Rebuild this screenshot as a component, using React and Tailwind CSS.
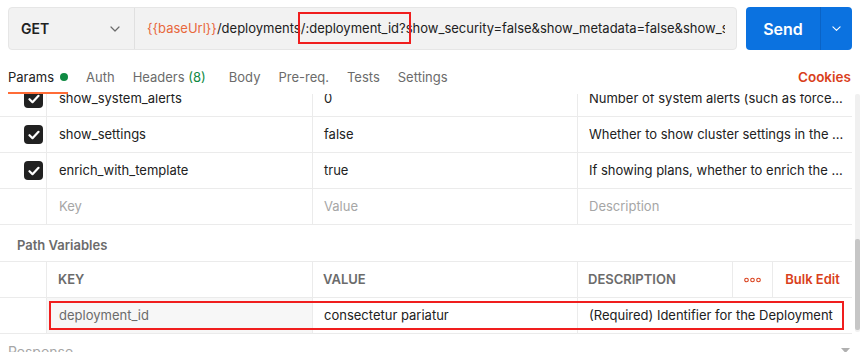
import React from "react";

const Check = () => (
  <div className="w-[19px] h-[19px] rounded-[4px] bg-[#212121] flex items-center justify-center">
    <svg width="12" height="10" viewBox="0 0 12 10" fill="none">
      <path d="M1.5 5.2 4.5 8.2 10.5 1.8" stroke="#fff" strokeWidth="2.2" strokeLinecap="round" strokeLinejoin="round" />
    </svg>
  </div>
);

const Chevron = ({ color = "#6b6b6b", size = 10 }) => (
  <svg width={size} height={size * 0.6} viewBox="0 0 10 6" fill="none">
    <path d="M1 1l4 4 4-4" stroke={color} strokeWidth="1.2" strokeLinecap="round" strokeLinejoin="round" />
  </svg>
);

const params = [
  { k: "show_system_alerts", v: "0", d: "Number of system alerts (such as force..." },
  { k: "show_settings", v: "false", d: "Whether to show cluster settings in the ..." },
  { k: "enrich_with_template", v: "true", d: "If showing plans, whether to enrich the ..." },
];

const tabs = ["Auth", "Headers", "Body", "Pre-req.", "Tests", "Settings"];

function ParamRow({ k, v, d, empty }) {
  const muted = empty ? "text-[#a6a6a6]" : "";
  return (
    <div className="flex h-[36px] border-b border-[#ebebeb] text-[13px]">
      <div className="w-[47px] shrink-0 border-r border-[#ebebeb] flex items-center pl-[24px]">
        {!empty && <Check />}
      </div>
      <div className={`w-[266px] shrink-0 border-r border-[#ebebeb] flex items-center pl-[12px] ${muted}`}>
        {k}
      </div>
      <div className={`w-[265px] shrink-0 border-r border-[#ebebeb] flex items-center pl-[11px] ${muted}`}>
        {v}
      </div>
      <div className={`flex-1 min-w-0 flex items-center pl-[11px] pr-[6px] ${muted}`}>
        <span className="truncate">{d}</span>
      </div>
    </div>
  );
}

export default function App() {
  return (
    <div
      className="w-[860px] h-[352px] overflow-hidden bg-white text-[#212121]"
      style={{ fontFamily: "Inter, 'Noto Sans', sans-serif" }}
    >
      {/* request bar */}
      <div className="flex gap-[9px] px-[8px] pt-[7px]">
        <div className="flex flex-1 min-w-0 h-[43px] rounded-[4px] border border-[#e6e6e6] bg-[#f2f2f2]">
          <div className="w-[126px] shrink-0 flex items-center justify-between pl-[12px] pr-[14px] border-r border-[#e0e0e0]">
            <span className="text-[14px] font-semibold">GET</span>
            <Chevron />
          </div>
          <div className="flex-1 min-w-0 flex pl-[12px] pr-[11px] text-[13px]">
            <div className="flex items-center min-w-0 whitespace-nowrap overflow-hidden">
              <span className="text-[#e8683c]">{"{{baseUrl}}"}</span>
              <span>/deployments</span>
              <span className="relative">
                /:deployment_id?
                <span className="absolute left-[-3px] right-[-5px] top-[-7px] bottom-[-6px] border-2 border-[#f01e1e]" />
              </span>
              <span>show_security=false&amp;show_metadata=false&amp;show_settings=false</span>
            </div>
          </div>
        </div>
        <div className="w-[106px] shrink-0 h-[43px] flex rounded-[4px] bg-[#0b72e0] text-white">
          <div className="flex-1 flex items-center justify-center text-[16px] font-semibold border-r border-[#0a63c6]">
            Send
          </div>
          <div className="w-[31px] flex items-center justify-center">
            <Chevron color="#ffffff" size={9} />
          </div>
        </div>
      </div>

      {/* tabs */}
      <div className="flex items-start justify-between px-[8px] mt-[17px] h-[27px] text-[13px]">
        <div className="flex gap-[18px]">
          <div className="flex items-start gap-[6px] h-[27px] border-b-2 border-[#ff6c37]">
            <span className="leading-[20px]">Params</span>
            <span className="w-[8px] h-[8px] rounded-full bg-[#0f8a42] mt-[6px]" />
          </div>
          {tabs.map((t) => (
            <div key={t} className={`leading-[20px] text-[#6b6b6b] ${t === "Headers" ? "pr-[5px]" : ""}`}>
              {t}
              {t === "Headers" && <span className="text-[#0f8a42]"> (8)</span>}
            </div>
          ))}
        </div>
        <div className="leading-[20px] text-[13.5px] font-semibold text-[#d9401c] pr-[1px]">Cookies</div>
      </div>

      {/* scrolling params pane */}
      <div className="flex h-[241px]">
        <div className="w-[852px] shrink-0 overflow-hidden">
          <div className="-mt-[13px]">
            {params.map((p) => (
              <ParamRow key={p.k} {...p} />
            ))}
            <ParamRow k="Key" v="Value" d="Description" empty />

            <div className="h-[36px] flex items-center pt-[5px] pl-[17px] text-[13px] font-semibold text-[#6b6b6b]">
              Path Variables
            </div>

            <div className="flex h-[37px] border-y border-[#ebebeb] text-[13px] font-semibold text-[#6b6b6b]">
              <div className="w-[47px] shrink-0 border-r border-[#ebebeb]" />
              <div className="w-[266px] shrink-0 border-r border-[#ebebeb] flex items-center pl-[11px]">KEY</div>
              <div className="w-[265px] shrink-0 border-r border-[#ebebeb] flex items-center pl-[10px]">VALUE</div>
              <div className="w-[155px] shrink-0 border-r border-[#ebebeb] flex items-center pl-[10px]">DESCRIPTION</div>
              <div className="w-[40px] shrink-0 border-r border-[#ebebeb] flex items-center justify-center">
                <svg width="17" height="6" viewBox="0 0 17 6" fill="none">
                  <circle cx="2.5" cy="3" r="1.8" stroke="#d9401c" strokeWidth="1.1" />
                  <circle cx="8.5" cy="3" r="1.8" stroke="#d9401c" strokeWidth="1.1" />
                  <circle cx="14.5" cy="3" r="1.8" stroke="#d9401c" strokeWidth="1.1" />
                </svg>
              </div>
              <div className="flex-1 flex items-center justify-center text-[#d9401c]">Bulk Edit</div>
            </div>

            <div className="relative flex h-[36px] border-b border-[#ebebeb] text-[13px]">
              <div className="w-[47px] shrink-0 border-r border-[#ebebeb]" />
              <div className="w-[266px] shrink-0 border-r border-[#ebebeb] bg-[#f7f7f7] text-[#6b6b6b] flex items-center pl-[12px]">
                deployment_id
              </div>
              <div className="w-[265px] shrink-0 border-r border-[#ebebeb] flex items-center pl-[11px]">
                consectetur pariatur
              </div>
              <div className="flex-1 flex items-center pl-[11px] whitespace-nowrap">
                (Required) Identifier for the Deployment
              </div>
              <div className="absolute left-[49px] w-[795px] top-[3px] h-[29px] border-2 border-[#f01e1e]" />
            </div>
          </div>
        </div>
        <div className="w-[8px] pl-[3px]">
          <div className="h-[238px] rounded-[2px] bg-[#f0f0f0] flex flex-col">
            <div className="mt-[145px] h-[91px] rounded-[2px] bg-[#c6c6c6]" />
          </div>
        </div>
      </div>

      {/* response pane header */}
      <div className="flex items-start justify-between pl-[8px] pr-[10px] pt-[7px] text-[14px] text-[#a6a6a6] leading-[20px]">
        <span>Response</span>
        <svg width="9" height="6" viewBox="0 0 9 6" className="mt-[6px]">
          <path d="M0 0h9L4.5 5z" fill="#b0b0b0" />
        </svg>
      </div>
    </div>
  );
}
